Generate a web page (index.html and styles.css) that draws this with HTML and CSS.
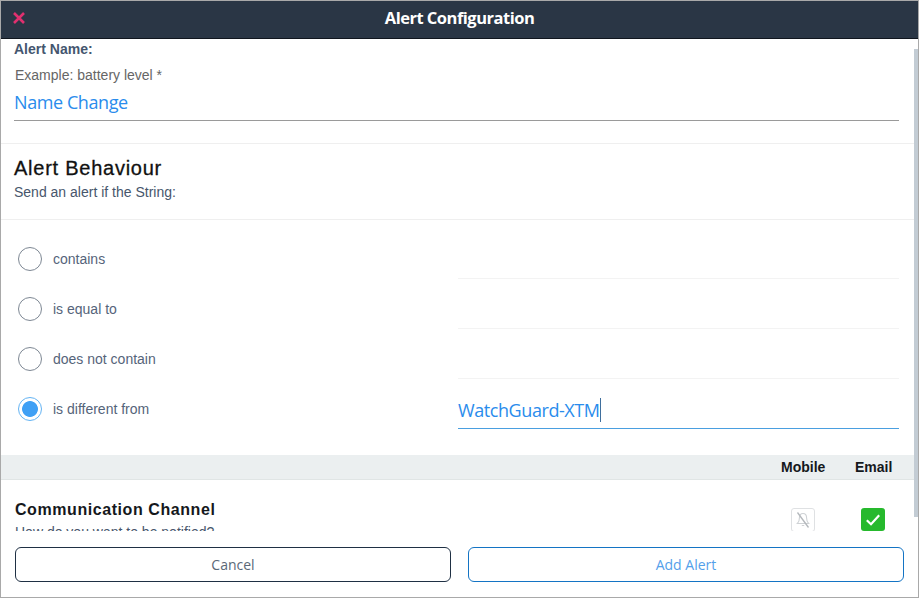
FILE: index.html
```html
<!DOCTYPE html>
<html lang="en">
<head>
<meta charset="utf-8">
<title>Alert Configuration</title>
<link rel="stylesheet" href="styles.css">
</head>
<body>
<div class="dialog">
  <header class="topbar">
    <svg class="close" width="14" height="14" viewBox="0 0 14 14" aria-label="Close"><path d="M2 2l10 10M12 2L2 12" fill="none" stroke="#e0306f" stroke-width="2.6"/></svg>
    <h1 class="title">Alert Configuration</h1>
  </header>
  <main class="scroller">
    <section class="name-section">
      <div class="field-label">Alert Name:</div>
      <div class="field-hint">Example: battery level *</div>
      <div class="name-value">Name Change</div>
    </section>
    <section class="behaviour">
      <h2 class="behaviour-title">Alert Behaviour</h2>
      <p class="sub">Send an alert if the String:</p>
    </section>
    <section class="options">
      <div class="option">
        <div class="choice"><span class="radio"></span><span class="choice-text">contains</span></div>
        <div class="value-line"></div>
      </div>
      <div class="option">
        <div class="choice"><span class="radio"></span><span class="choice-text">is equal to</span></div>
        <div class="value-line"></div>
      </div>
      <div class="option">
        <div class="choice"><span class="radio"></span><span class="choice-text">does not contain</span></div>
        <div class="value-line"></div>
      </div>
      <div class="option">
        <div class="choice"><span class="radio radio-on"></span><span class="choice-text">is different from</span></div>
        <div class="value-line value-active"><span class="value-text">WatchGuard-XTM</span><span class="caret"></span></div>
      </div>
    </section>
    <div class="channel-head">
      <span class="col-head col-mobile">Mobile</span>
      <span class="col-head col-email">Email</span>
    </div>
    <section class="channel">
      <div class="channel-text">
        <h3 class="channel-title">Communication Channel</h3>
        <p class="sub channel-sub">How do you want to be notified?</p>
      </div>
      <div class="channel-box col-mobile">
        <span class="mute-box">
          <svg width="16" height="18" viewBox="0 0 16 18"><path d="M8 2.500c-2.600 0-3.600 2-3.600 4.400 0 2.800-.6 4.300-2 5.600h11.200c-1.400-1.300-2-2.800-2-5.600C11.600 4.500 10.600 2.500 8 2.500zM6.800 14.500h2.400" fill="none" stroke="#cfd2d5" stroke-width="1.100"/><path d="M2.500 1.500l11 15" fill="none" stroke="#b4b8bc" stroke-width="1.300"/></svg>
        </span>
      </div>
      <div class="channel-box col-email">
        <span class="check-box">
          <svg width="14" height="12" viewBox="0 0 14 12"><path d="M.8 6.200l4.200 4 8.200-9" fill="none" stroke="#fff" stroke-width="2.200"/></svg>
        </span>
      </div>
    </section>
    <div class="scrollbar"></div>
  </main>
  <footer class="actions">
    <button class="btn btn-cancel" type="button">Cancel</button>
    <button class="btn btn-add" type="button">Add Alert</button>
  </footer>
</div>
</body>
</html>
```
FILE: styles.css
```css
* { box-sizing: border-box; }
html, body { margin: 0; padding: 0; background: #fff; }
body { width: 919px; height: 598px; overflow: hidden; font-family: "Liberation Sans", Arial, sans-serif; }

.dialog {
  width: 919px; height: 598px;
  display: flex; flex-direction: column;
  border: 1px solid #a9a9a9;
  background: #fff;
}
.topbar {
  flex: none; height: 38px;
  display: flex; align-items: center; justify-content: center;
  position: relative;
  padding-bottom: 3px;
  background: #2a3645;
  border-bottom: 1px solid #10161e;
}
.close { position: absolute; left: 11px; top: 10px; }
.title { margin: 0; font: 700 16.5px/20px "Open Sans", sans-serif; color: #fff; letter-spacing: -0.5px; }

.scroller { flex: none; height: 492px; overflow: hidden; position: relative; }
.scrollbar {
  position: absolute; right: 0; top: 10px; width: 4px; height: 468px;
  background: #c3ccd4;
}

.name-section { height: 105px; padding: 2px 19px 0 13px; border-bottom: 1px solid #efefef; }
.field-label { font-size: 14px; line-height: 16px; font-weight: 700; color: #44566f; }
.field-hint { margin: 10px 0 0 1px; font-size: 14px; line-height: 16px; color: #666; }
.name-value {
  margin-top: 5px; height: 33px;
  font: 400 18px/28px "Open Sans", sans-serif; letter-spacing: -0.42px; color: #2a8cec;
  border-bottom: 1px solid #9a9a9a;
}

.behaviour { height: 76px; padding: 13px 13px 0; border-bottom: 1px solid #efefef; }
.behaviour-title { margin: 0; font-size: 20px; line-height: 22px; font-weight: 400; letter-spacing: 0.75px; color: #111; -webkit-text-stroke: 0.3px #111; }
.sub { margin: 5px 0 0; font-size: 14px; line-height: 17px; color: #47566c; }

.options { height: 235px; padding-top: 14px; }
.option { height: 50px; display: flex; }
.choice { width: 457px; height: 50px; padding-left: 17px; display: flex; align-items: center; }
.radio {
  width: 24px; height: 24px; border-radius: 50%;
  border: 1px solid #7d8793; background: #fff; flex: none;
}
.radio-on {
  border-color: #63b3f3;
  background: radial-gradient(circle, #3fa0f5 0 7.5px, #fff 8.3px);
}
.choice-text { margin-left: 11px; font-size: 14px; color: #55647a; }
.value-line { width: 441px; height: 45px; border-bottom: 1px solid #f3f3f3; }
.value-active {
  padding-top: 14px;
  display: flex; align-items: flex-start;
  border-bottom-color: #4a9fe0;
}
.value-text { font: 400 18px/24px "Open Sans", sans-serif; letter-spacing: -0.42px; color: #2a8cec; }
.caret { width: 1px; height: 24px; background: #3f6f9d; }

.channel-head {
  height: 25px; position: relative;
  background: #ebeff0;
  border-bottom: 1px solid #e0e5e5;
  margin-right: 4px;
}
.col-head { position: absolute; top: 4px; font-size: 14px; line-height: 16px; font-weight: 700; color: #15181c; }
.col-head.col-mobile { left: 780px; }
.col-head.col-email { left: 854px; }

.channel { position: relative; height: 51px; }
.channel-text { padding: 21px 14px 0; }
.channel-title { margin: 0; font-size: 16px; line-height: 18px; font-weight: 700; letter-spacing: 0.57px; color: #15181c; }
.channel-sub { margin-top: 5px; }
.channel-box { position: absolute; top: 28px; }
.channel-box.col-mobile { left: 790px; }
.channel-box.col-email { left: 860px; }
.mute-box {
  display: flex; align-items: center; justify-content: center;
  width: 24px; height: 24px; border: 1px solid #dfe1e3; border-radius: 3px; background: #fff;
}
.check-box {
  display: flex; align-items: center; justify-content: center;
  width: 24px; height: 23px; border-radius: 3px; background: #26b92d;
}

.actions { flex: 1; padding: 16px 14px 0; display: flex; gap: 17px; }
.btn {
  height: 35px; background: #fff; border-radius: 6px;
  font: 400 14px/20px "Open Sans", sans-serif; cursor: pointer;
}
.btn-cancel { width: 436px; border: 1px solid #1f3044; color: #5b6878; }
.btn-add { width: 436px; border: 1px solid #1474c4; color: #54a0ea; }
```
